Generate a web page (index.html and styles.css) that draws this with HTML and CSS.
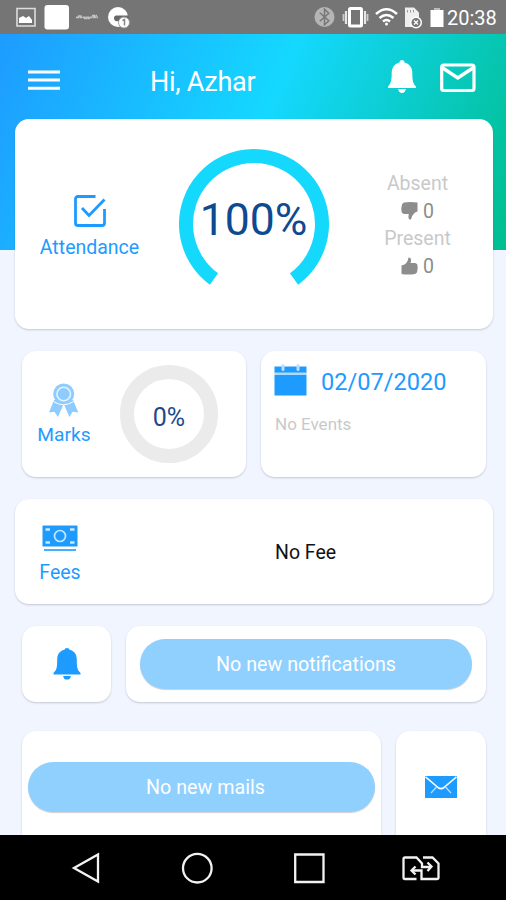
FILE: index.html
```html
<!DOCTYPE html>
<html lang="en">
<head>
<meta charset="utf-8">
<title>Student dashboard</title>
<link rel="stylesheet" href="styles.css">
</head>
<body>
<div class="phone">
  <div class="status">
    <svg class="status-left" width="140" height="34" viewBox="0 0 140 34">
      <path d="M17 8.500h18v17.500h-18z" fill="none" stroke="#ddd" stroke-width="1.600"/>
      <path d="M19 23v-5l4-2 3 2 3-2 3 4v3z" fill="#fff"/>
      <rect x="44.500" y="5" width="24.500" height="24.500" rx="3" fill="#fff"/>
      <path d="M76 17.300h22M78 16h4M84 18.500h6M92 15.700h5" stroke="#c4c4c4" stroke-width="1.700" stroke-dasharray="3 .4" fill="none"/>
      <circle cx="118" cy="17" r="10" fill="#fff"/>
      <path d="M116 15.500h13v3h-9a3 3 0 1 1-4-3z" fill="#686868"/>
      <circle cx="124" cy="22.500" r="5.500" fill="#fff" stroke="#999" stroke-width="1"/>
      <path d="M122.500 20.500l2-1v6" fill="none" stroke="#888" stroke-width="1.500"/>
    </svg>
    <svg class="status-right" width="134" height="34" viewBox="312 0 134 34">
      <circle cx="324.500" cy="17" r="10" fill="#b5b5b5"/>
      <path d="M319.800 12.800l9 8-4.300 4v-15.600l4.300 4-9 8" fill="none" stroke="#777" stroke-width="1.500"/>
      <rect x="349.500" y="8.500" width="12" height="17.500" rx="1" fill="none" stroke="#fff" stroke-width="3"/>
      <path d="M346 11v13M365 11v13" stroke="#e5e5e5" stroke-width="2.200"/>
      <path d="M343.500 14v7M367.500 14v7" stroke="#ccc" stroke-width="1.800"/>
      <path d="M376 14q10.500-9.500 21 0M379.500 18q7-6 14 0M383 21.500q3.500-3 7 0" fill="none" stroke="#fff" stroke-width="2.500"/>
      <circle cx="386.500" cy="24" r="1.500" fill="#fff"/>
      <path d="M405 7.500h9l5 5v14.500h-14z" fill="#eee"/>
      <path d="M407.500 10v2.500M410.500 10v2.500M413.500 10v2.500" stroke="#999" stroke-width="1"/>
      <circle cx="416" cy="22.500" r="5.300" fill="#777" stroke="#fff" stroke-width="1.500"/>
      <path d="M414 20.500l4 4m0-4l-4 4" stroke="#fff" stroke-width="1.300"/>
      <path d="M434 8h6v2h3.500v17h-13v-17h3.500z" fill="#fff"/>
      <path d="M434 8h6v2h-6z" fill="#bbb"/>
    </svg>
    <span class="clock">20:38</span>
  </div>

  <main class="content">
    <header class="header">
      <svg class="menu" width="32" height="20" viewBox="0 0 32 20"><path d="M0 2h32M0 10h32M0 18.300h32" stroke="#fff" stroke-width="3"/></svg>
      <h1 class="greeting">Hi, Azhar</h1>
      <svg class="header-bell" width="28" height="34" viewBox="0 0 28 34" fill="#fff"><path d="M14 0c1.600 0 2.300 1.300 2.500 2.400C22 3.800 24.300 8 24.300 13c0 8 .8 10.500 3.700 13.500v1.500H0v-1.500c2.900-3 3.700-5.500 3.700-13.500C3.700 8 6 3.800 11.500 2.400 11.700 1.300 12.400 0 14 0zM10 29h8l-1.200 2.800q-2.800 2.400-5.600 0z"/></svg>
      <svg class="header-mail" width="36" height="30" viewBox="0 0 36 30"><rect x="1.700" y="2" width="32.300" height="25.500" rx="2" fill="none" stroke="#fff" stroke-width="3.200"/><path d="M2 4.500l15.800 10.500L33.700 4.500" fill="none" stroke="#fff" stroke-width="3.500"/></svg>
    </header>

    <section class="card attendance">
      <div class="attendance-title">
        <svg width="32" height="33" viewBox="0 0 32 33" fill="none" stroke="#1e9bff" stroke-width="2.800"><path d="M21.500 2.500H4Q1.500 2.500 1.500 5V29Q1.500 31.500 4 31.500H28Q30.500 31.500 30.500 29V15"/><path d="M8 14l7 7.500L30.500 5.500"/></svg>
        <span class="label">Attendance</span>
      </div>
      <div class="gauge">
        <svg class="gauge-ring" width="150" height="150" viewBox="0 0 150 150"><path d="M35 130A68 68 0 1 1 115 130" fill="none" stroke="#14d8fc" stroke-width="14"/></svg>
        <span class="gauge-value">100%</span>
      </div>
      <div class="counts">
        <span class="count-label">Absent</span>
        <span class="count"><svg width="17" height="18" viewBox="0 0 17 18" fill="#8d8d8d"><path d="M3 .5Q9-.5 16.500 .5V9.500L14 10.500Q11 13 10 17.500Q7 17.500 7.500 14L7.800 12H3Q0 11.500 .5 8.500Q0 7 .6 5Q.4 1.500 3 .5z"/></svg>0</span>
        <span class="count-label">Present</span>
        <span class="count"><svg width="17" height="18" viewBox="0 0 17 18" fill="#8d8d8d"><path d="M14 17Q7 18 .5 17V8.500L3.500 7.500Q7 5 7.500 .5Q10.500 .5 10 4L9.500 6H14Q17 6.500 16.500 9.500Q17 11 16.400 12.500Q16.600 16 14 17z"/></svg>0</span>
      </div>
    </section>

    <div class="row row-stats">
      <section class="card marks">
        <div class="marks-title">
          <svg width="30" height="35" viewBox="0 0 30 35"><path d="M5 17L0 29.500l5.500-.8 3.500 5.300 5.200-12h1l5.200 12 3.200-5.300 5.700.8L24 17z" fill="#8ecbff"/><circle cx="14.700" cy="11" r="10.500" fill="#8ecbff"/><circle cx="14.700" cy="11" r="6.800" fill="none" stroke="#e3f3ff" stroke-width="1.600"/><path d="M4.500 18.500q10 6.500 20 0" fill="none" stroke="#fff" stroke-width="1"/></svg>
          <span class="label">Marks</span>
        </div>
        <div class="marks-gauge">0%</div>
      </section>
      <section class="card events">
        <div class="date-row">
          <svg width="33" height="32" viewBox="0 0 33 32"><path d="M.5 2.500h32V9H.5zM.5 11h32v20.500H.5z" fill="#1e9bff"/><path d="M.5 8.500h32v2.500H.5z" fill="#addbff"/><path d="M9 1.500v4M24 1.500v4" stroke="#b9dfff" stroke-width="3" stroke-linecap="round"/></svg>
          <span class="date">02/07/2020</span>
        </div>
        <span class="no-events">No Events</span>
      </section>
    </div>

    <section class="card fees">
      <div class="fees-title">
        <svg width="36" height="27" viewBox="0 0 36 27"><path d="M.5.500h35v21H.5z" fill="#1e9bff"/><path d="M2 25h32" stroke="#4aaefc" stroke-width="2"/><circle cx="18" cy="11" r="5.500" fill="none" stroke="#c9e7ff" stroke-width="1.700"/><path d="M3.500 4.500H8M28 4.500h4.500M3.500 17.500H8M28 17.500h4.500" stroke="#c9e7ff" stroke-width="2.300"/></svg>
        <span class="label">Fees</span>
      </div>
      <span class="no-fee">No Fee</span>
    </section>

    <div class="row row-notice">
      <section class="card tile">
        <svg width="28" height="32" viewBox="0 0 28 32" fill="#1e9bff"><path d="M14 0c1.500 0 2.300.8 2.500 1.800C22 3 23.800 7 23.800 12c0 7 .5 10 3.700 13v1.500H.5V25c3.200-3 3.700-6 3.700-13C4.200 7 6 3 11.500 1.800 11.700.8 12.500 0 14 0zM10 28h8l-1.200 2.700q-2.800 1.800-5.600 0z"/></svg>
      </section>
      <section class="card notice"><div class="pill">No new notifications</div></section>
    </div>

    <div class="row row-mail">
      <section class="card mails"><div class="pill">No new mails</div></section>
      <section class="card tile tile-mail">
        <svg width="32" height="22" viewBox="0 0 32 22"><path d="M0 0h32v22H0z" fill="#1e9bff"/><path d="M.5.800L13 11.500q3 2.300 6 0L31.500.800" fill="none" stroke="#fff" stroke-width="1.600"/><path d="M11.500 11L6 17M20.500 11L26 17" stroke="#b8dfff" stroke-width="1.200"/></svg>
      </section>
    </div>
  </main>

  <nav class="navbar">
    <svg width="506" height="65" viewBox="0 835 506 65" fill="none" stroke="#f2f2f2" stroke-width="2.300">
      <path d="M98 854.500v27L74 868z"/>
      <circle cx="197.300" cy="868.200" r="14.300"/>
      <path d="M295.200 854.500h28.300v27.500h-28.300z"/>
      <path d="M416.500 879H405q-1.500 0-1.500-1.500V859q0-1.500 1.500-1.500h11.500l5.500 6v3.500h9M423 857.500h9.500l6 6V877.500q0 1.500-1.500 1.500H421.500v-8.500H412"/>
      <path d="M427.500 862.500l4 4-4 4.500M415.500 866.500l-4 4 4 4"/>
    </svg>
  </nav>
</div>
</body>
</html>
```

FILE: styles.css
```css
* { box-sizing: border-box; }
body { margin: 0; font-family: Roboto, "Liberation Sans", sans-serif; }
svg { display: block; flex: none; }

.phone { display: flex; flex-direction: column; width: 506px; height: 900px; overflow: hidden; }

.status { display: flex; flex: none; height: 34px; background: #757575; color: #fff; }
.status-right { margin-left: 172px; }
.clock { margin-left: 1px; font-size: 20px; line-height: 37px; white-space: nowrap; }

.content {
  flex: none;
  height: 801px;
  overflow: hidden;
  background: linear-gradient(113.1deg, #1e9bff, #14d8ff 50%, #00be8e) 0 0 / 100% 216px no-repeat #f1f5ff;
}

.header { display: flex; height: 85px; padding-left: 28px; }
.menu { margin-top: 36px; }
.greeting { width: 238px; margin: 34px 0 0 90px; color: #fff; font-size: 27px; font-weight: 400; line-height: 29px; letter-spacing: -.25px; white-space: nowrap; }
.header-bell { margin-top: 26px; }
.header-mail { margin: 29px 0 0 24px; }

.card { border-radius: 14px; background: #fff; box-shadow: 0 1px 2px rgba(60, 60, 80, .24); }
.label { color: #1e9bff; font-size: 19.500px; line-height: 24px; white-space: nowrap; }

.attendance { display: flex; width: 478px; height: 210px; margin-left: 15px; }
.attendance-title { display: flex; flex-direction: column; align-items: center; width: 149px; padding-top: 75px; gap: 9px; }
.gauge { display: grid; width: 150px; height: 150px; margin: 30px 0 0 14.500px; }
.gauge-ring, .gauge-value { grid-area: 1 / 1; }
.gauge-value { padding-top: 46px; color: #0d4a92; font-size: 44.500px; line-height: 50px; text-align: center; }
.counts { display: flex; flex-direction: column; align-items: center; width: 120px; margin: 51px 0 0 29px; color: #8d8d8d; font-size: 19.500px; line-height: 27.700px; }
.count-label { color: #c9c9c9; }
.count { display: flex; align-items: center; gap: 5px; }
.count svg { margin-top: -1px; }

.row { display: flex; gap: 15px; margin-left: 22px; }
.row-stats { margin-top: 22px; }
.marks { display: flex; width: 224px; height: 126px; }
.marks-title { display: flex; flex-direction: column; align-items: center; width: 84px; padding-top: 32px; gap: 5px; }
.marks-title .label { font-size: 19.200px; }
.marks-gauge { width: 98px; height: 98px; margin: 14px 0 0 14px; border: 14px solid #ebebeb; border-radius: 50%; color: #1c4a8c; font-size: 25px; line-height: 77px; text-align: center; }
.events { width: 225px; height: 126px; padding: 13px 0 0 13px; }
.date-row { display: flex; gap: 14px; }
.date { color: #1e9bff; font-size: 23.600px; line-height: 36px; white-space: nowrap; }
.no-events { display: block; margin-top: 14px; padding-left: 1px; color: #c9c9c9; font-size: 17px; line-height: 20px; }

.fees { display: flex; width: 478px; height: 105px; margin: 22px 0 0 15px; }
.fees-title { display: flex; flex-direction: column; align-items: center; width: 90px; padding-top: 26px; gap: 9px; }
.no-fee { margin: 42px 0 0 170px; color: #111; font-size: 19.500px; line-height: 24px; }

.row-notice { margin-top: 22px; }
.tile { display: flex; justify-content: center; width: 89px; height: 76px; padding-top: 22px; }
.notice { width: 360px; height: 76px; padding: 13px 14px; }
.pill { height: 50px; border-radius: 25px; background: #90d0ff; box-shadow: 0 1px 1px rgba(60, 60, 80, .25); color: #fff; font-size: 19.700px; line-height: 52px; text-align: center; white-space: nowrap; }

.row-mail { margin-top: 29px; }
.mails { width: 359px; height: 140px; padding: 31px 6px; }
.mails .pill { padding-left: 8px; }
.tile-mail { width: 90px; height: 140px; padding-top: 45px; }

.navbar { flex: none; height: 65px; background: #000; }
```
